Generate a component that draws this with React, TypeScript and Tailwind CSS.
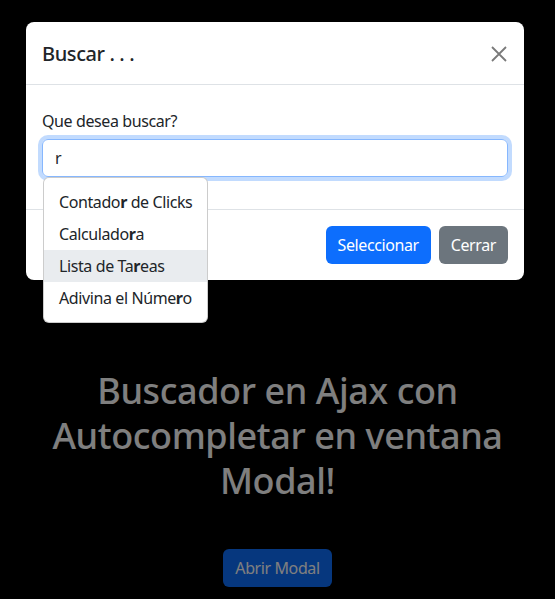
import React from "react";

const items: { pre: string; m: string; post: string; active?: boolean }[] = [
  { pre: "Contado", m: "r", post: " de Clicks" },
  { pre: "Calculado", m: "r", post: "a" },
  { pre: "Lista de Ta", m: "r", post: "eas", active: true },
  { pre: "Adivina el Núme", m: "r", post: "o" },
];

export default function App() {
  return (
    <div
      className="relative w-[555px] h-[599px] overflow-hidden bg-black text-[#212529] tracking-[-0.025em]"
      style={{ fontFamily: '"Noto Sans", "Open Sans", sans-serif' }}
    >
      {/* page content */}
      <div className="flex flex-col items-center pt-[368px]">
        <h1 className="text-center text-white text-[36px] leading-[45px] font-medium w-[480px]">
          Buscador en Ajax con Autocompletar en ventana Modal!
        </h1>
        <button className="mt-[46px] h-[38px] px-3 rounded-md bg-[#0d6efd] text-white text-base">
          Abrir Modal
        </button>
      </div>

      {/* backdrop */}
      <div className="absolute inset-0 bg-black/50" />

      {/* modal */}
      <div className="absolute left-[26px] top-[22px] w-[498px] bg-white rounded-lg">
        <div className="flex items-center justify-between px-4 pt-[17px] pb-[15px] border-b border-[#dee2e6]">
          <h5 className="text-[20px] leading-[30px] font-medium">Buscar . . .</h5>
          <svg width="16" height="16" viewBox="0 0 16 16" className="mr-[1px]">
            <path d="M1 1 L15 15 M15 1 L1 15" stroke="#7a7a7a" strokeWidth="1.8" />
          </svg>
        </div>
        <div className="p-4">
          <div className="mb-4">
            <label className="block text-base leading-6 mt-2 mb-[6px]">Que desea buscar?</label>
            <div className="relative">
              <div className="h-[38px] rounded-md border border-[#86b7fe] shadow-[0_0_0_4px_rgba(13,110,253,0.25)] px-3 flex items-center text-base">
                r
              </div>
              <div className="absolute left-[1px] top-[38px] w-[165px] bg-white border border-black/20 rounded-md py-2 z-10">
                {items.map((it, i) => (
                  <div
                    key={i}
                    className={`pl-[15px] pr-4 h-8 flex items-center text-base whitespace-pre ${it.active ? "bg-[#e9ecef]" : ""}`}
                  >
                    {it.pre}
                    <b className="font-bold">{it.m}</b>
                    {it.post}
                  </div>
                ))}
              </div>
            </div>
          </div>
        </div>
        <div className="flex justify-end items-center p-3 border-t border-[#dee2e6]">
          <button className="m-1 h-[38px] px-3 rounded-md bg-[#0d6efd] text-white text-base">
            Seleccionar
          </button>
          <button className="m-1 h-[38px] px-3 rounded-md bg-[#6c757d] text-white text-base">
            Cerrar
          </button>
        </div>
      </div>
    </div>
  );
}
